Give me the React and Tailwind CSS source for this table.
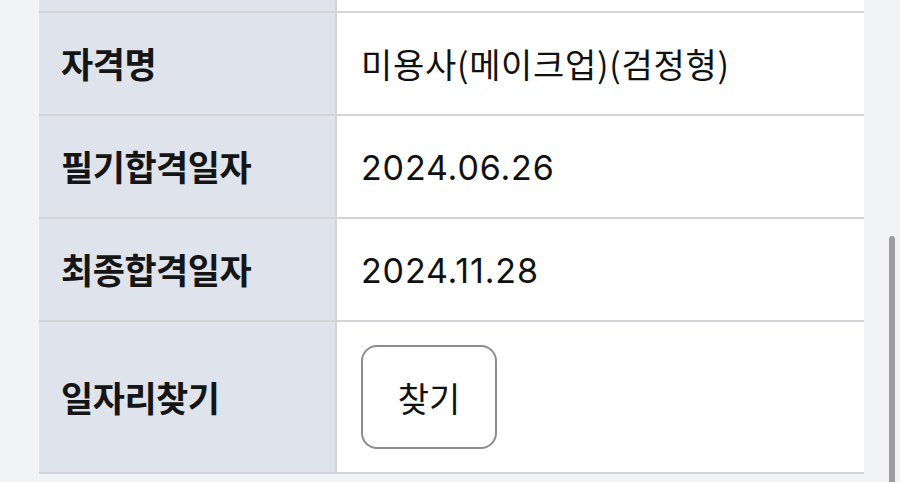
import React from 'react';

const rows = [
  { label: '자격명', value: '미용사(메이크업)(검정형)', num: false },
  { label: '필기합격일자', value: '2024.06.26', num: true },
  { label: '최종합격일자', value: '2024.11.28', num: true },
];

const font = { fontFamily: '"Noto Sans CJK KR", "Noto Sans", sans-serif' };

const Row = ({ label, children, tall }) => (
  <div className={`flex border-b-2 border-[#d3d4d8] ${tall ? 'h-[152px]' : 'h-[103px]'}`}>
    <div className="w-[298px] shrink-0 flex items-center pl-[22px] bg-[#dfe3ec] border-r-2 border-[#d3d4d8]">
      <span className="text-[35px] font-bold text-[#151515] tracking-[-0.5px]">{label}</span>
    </div>
    <div className="flex-1 flex items-center pl-[24px] bg-white">{children}</div>
  </div>
);

export default function App() {
  return (
    <div className="relative w-[900px] h-[482px] overflow-hidden bg-[#f2f3f7]" style={font}>
      <div className="ml-[39px] w-[825px]">
        {/* previous row, cut off at the top */}
        <div className="flex h-[13px] border-b-2 border-[#d3d4d8]">
          <div className="w-[298px] shrink-0 bg-[#dfe3ec] border-r-2 border-[#d3d4d8]" />
          <div className="flex-1 bg-white" />
        </div>
        {rows.map((r) => (
          <Row key={r.label} label={r.label}>
            {r.num ? (
              <span className="font-['Inter','Noto_Sans',sans-serif] text-[34px] text-[#111] tracking-[0.85px] pt-[2px]">
                {r.value}
              </span>
            ) : (
              <span className="text-[34px] text-[#111] tracking-[0.7px]">{r.value}</span>
            )}
          </Row>
        ))}
        <Row label="일자리찾기" tall>
          <button className="w-[136px] h-[104px] rounded-[16px] border-2 border-[#8d8d8f] bg-white text-[34px] text-[#111]">
            찾기
          </button>
        </Row>
      </div>

      {/* scrollbar */}
      <div className="absolute left-[889px] top-[236px] w-[6px] h-[260px] rounded-full bg-[#9b9ba0]" />
    </div>
  );
}
